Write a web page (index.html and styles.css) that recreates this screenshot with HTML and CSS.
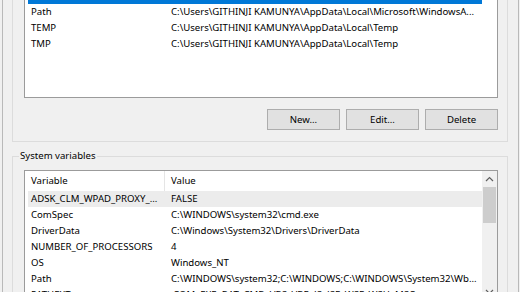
FILE: index.html
```html
<!DOCTYPE html>
<html lang="en">
<head>
  <meta charset="UTF-8">
  <meta name="viewport" content="width=device-width, initial-scale=1.0">
  <title>Environment Variables</title>
  <link rel="stylesheet" href="styles.css">
</head>
<body>

<div class="window">

  <fieldset class="group group-user">
    <legend>User variables for GITHINJI KAMUNYA</legend>
    <div class="group-body">
      <div class="list">
        <div class="list-main">
          <div class="list-head">
            <div class="head-cell head-name">Variable</div>
            <div class="head-cell">Value</div>
          </div>
          <div class="row selected">
            <div class="cell-name">OneDrive</div>
            <div class="cell-value">C:\Users\GITHINJI KAMUNYA\OneDrive</div>
          </div>
          <div class="row">
            <div class="cell-name">Path</div>
            <div class="cell-value">C:\Users\GITHINJI KAMUNYA\AppData\Local\Microsoft\WindowsA...</div>
          </div>
          <div class="row">
            <div class="cell-name">TEMP</div>
            <div class="cell-value">C:\Users\GITHINJI KAMUNYA\AppData\Local\Temp</div>
          </div>
          <div class="row">
            <div class="cell-name">TMP</div>
            <div class="cell-value">C:\Users\GITHINJI KAMUNYA\AppData\Local\Temp</div>
          </div>
        </div>
      </div>

      <div class="buttons">
        <button>New...</button>
        <button>Edit...</button>
        <button>Delete</button>
      </div>
    </div>
  </fieldset>

  <fieldset class="group group-system">
    <legend>System variables</legend>
    <div class="group-body">
      <div class="list">
        <div class="list-main">
          <div class="list-head">
            <div class="head-cell head-name">Variable</div>
            <div class="head-cell">Value</div>
          </div>
          <div class="row hover">
            <div class="cell-name">ADSK_CLM_WPAD_PROXY_...</div>
            <div class="cell-value">FALSE</div>
          </div>
          <div class="row">
            <div class="cell-name">ComSpec</div>
            <div class="cell-value">C:\WINDOWS\system32\cmd.exe</div>
          </div>
          <div class="row">
            <div class="cell-name">DriverData</div>
            <div class="cell-value">C:\Windows\System32\Drivers\DriverData</div>
          </div>
          <div class="row">
            <div class="cell-name">NUMBER_OF_PROCESSORS</div>
            <div class="cell-value">4</div>
          </div>
          <div class="row">
            <div class="cell-name">OS</div>
            <div class="cell-value">Windows_NT</div>
          </div>
          <div class="row">
            <div class="cell-name">Path</div>
            <div class="cell-value">C:\WINDOWS\system32;C:\WINDOWS;C:\WINDOWS\System32\Wb...</div>
          </div>
          <div class="row">
            <div class="cell-name">PATHEXT</div>
            <div class="cell-value">.COM;.EXE;.BAT;.CMD;.VBS;.VBE;.JS;.JSE;.WSF;.WSH;.MSC</div>
          </div>
        </div>
        <div class="scrollbar">
          <div class="arrow">
            <svg width="9" height="6" viewBox="0 0 9 6"><polyline points="1,5 4.5,1.5 8,5" fill="none" stroke="#606060" stroke-width="1.2"/></svg>
          </div>
          <div class="thumb"></div>
          <div class="track"></div>
          <div class="arrow">
            <svg width="9" height="6" viewBox="0 0 9 6"><polyline points="1,1 4.5,4.5 8,1" fill="none" stroke="#606060" stroke-width="1.2"/></svg>
          </div>
        </div>
      </div>
    </div>
  </fieldset>

</div>

</body>
</html>
```

FILE: styles.css
```css
body {
  margin: 0;
  height: 292px;
  overflow: hidden;
  background-color: #f0f0f0;
  font-family: "Noto Sans", sans-serif;
  font-size: 9.6px;
  color: #000;
}
.window {
  margin-left: 2px;
  width: 515px;
  height: 292px;
  border-left: 1px solid #b9b9b9;
  border-right: 1px solid #b9b9b9;
  overflow: hidden;
}
.group {
  width: 496px;
  box-sizing: border-box;
  margin: 0 0 0 9px;
  padding: 0;
  border: 1px solid #dcdcdc;
  min-width: 0;
}
.group-user {
  margin-top: -55px;
}
.group-system {
  margin-top: 6px;
}
legend {
  margin-left: 6px;
  padding: 0 1px;
  line-height: 16px;
}
.group-body {
  padding: 6px 9px 11px 11px;
}
.list {
  display: flex;
  height: 131px;
  box-sizing: border-box;
  border: 1px solid #9b9b9b;
  background-color: #fff;
  overflow: hidden;
}
.list-main {
  width: 457px;
  flex: none;
}
.list-head {
  display: flex;
  height: 20px;
  line-height: 20px;
}
.head-cell {
  padding-left: 6px;
}
.head-name {
  width: 133px;
  border-right: 1px solid #e5e5e5;
}
.row {
  display: grid;
  grid-template-columns: 137px 316px;
  margin-left: 3px;
  height: 16px;
  line-height: 16px;
  white-space: nowrap;
}
.cell-name {
  padding-left: 3px;
  overflow: hidden;
}
.cell-value {
  padding-left: 6px;
  overflow: hidden;
}
.row.selected {
  background-color: #0078d7;
  color: #fff;
}
.row.hover {
  background-color: #ececec;
}
.buttons {
  display: flex;
  justify-content: flex-end;
  gap: 6px;
  margin-top: 11px;
}
button {
  width: 73px;
  height: 21px;
  padding: 0;
  font-family: inherit;
  font-size: 9.6px;
  color: #000;
  background-color: #e1e1e1;
  border: 1px solid #adadad;
}
.scrollbar {
  width: 15px;
  flex: none;
  display: flex;
  flex-direction: column;
  background-color: #f0f0f0;
}
.arrow {
  height: 16px;
  display: flex;
  align-items: center;
  justify-content: center;
  flex: none;
}
.thumb {
  height: 36px;
  margin: 0 1px;
  background-color: #cdcdcd;
  flex: none;
}
.track {
  flex: 1;
}
```
